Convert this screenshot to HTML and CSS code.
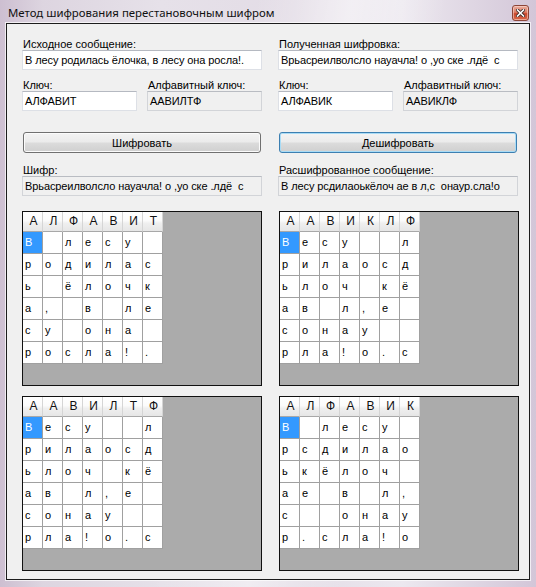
FILE: index.html
```html
<!DOCTYPE html>
<html lang="ru">
<head>
<meta charset="utf-8">
<title>Метод шифрования перестановочным шифром</title>
<link rel="stylesheet" href="styles.css">
</head>
<body>
<div class="window">
  <div class="titlebar">
    <span class="title">Метод шифрования перестановочным шифром</span>
    <span class="close">
      <svg width="9" height="8" viewBox="0 0 9 8">
        <path d="M1.5 1 L7.5 7 M7.5 1 L1.5 7" stroke="#3a2a28" stroke-width="3.2" stroke-linecap="square" fill="none"/>
        <path d="M1.5 1 L7.5 7 M7.5 1 L1.5 7" stroke="#ffffff" stroke-width="1.6" stroke-linecap="square" fill="none"/>
      </svg>
    </span>
  </div>
  <div class="client">
    <div class="cols">
      <div class="col">
        <div class="field">
          <div class="lbl">Исходное сообщение:</div>
          <div class="box">В лесу родилась ёлочка, в лесу она росла!.</div>
        </div>
        <div class="keyrow">
          <div class="field">
            <div class="lbl">Ключ:</div>
            <div class="box">АЛФАВИТ</div>
          </div>
          <div class="field alpha">
            <div class="lbl">Алфавитный ключ:</div>
            <div class="box ro">ААВИЛТФ</div>
          </div>
        </div>
        <div class="btn">Шифровать</div>
        <div class="field gapped">
          <div class="lbl">Шифр:</div>
          <div class="box ro">Врьасреилволсло науачла! о ,уо ске .лдё&nbsp; с</div>
        </div>
      </div>
      <div class="col">
        <div class="field">
          <div class="lbl">Полученная шифровка:</div>
          <div class="box">Врьасреилволсло науачла! о ,уо ске .лдё&nbsp; с</div>
        </div>
        <div class="keyrow">
          <div class="field">
            <div class="lbl">Ключ:</div>
            <div class="box">АЛФАВИК</div>
          </div>
          <div class="field alpha">
            <div class="lbl">Алфавитный ключ:</div>
            <div class="box ro">ААВИКЛФ</div>
          </div>
        </div>
        <div class="btn focus">Дешифровать</div>
        <div class="field gapped">
          <div class="lbl">Расшифрованное сообщение:</div>
          <div class="box ro">В лесу рсдилаоькёлоч ае в л,с&nbsp; онаур.сла!о</div>
        </div>
      </div>
    </div>

    <div class="panels">
      <div class="panel">
        <div class="grid">
          <div class="hd">А</div><div class="hd">Л</div><div class="hd">Ф</div><div class="hd">А</div><div class="hd">В</div><div class="hd">И</div><div class="hd">Т</div>
          <div class="c sel">В</div><div class="c"></div><div class="c">л</div><div class="c">е</div><div class="c">с</div><div class="c">у</div><div class="c"></div>
          <div class="c">р</div><div class="c">о</div><div class="c">д</div><div class="c">и</div><div class="c">л</div><div class="c">а</div><div class="c">с</div>
          <div class="c">ь</div><div class="c"></div><div class="c">ё</div><div class="c">л</div><div class="c">о</div><div class="c">ч</div><div class="c">к</div>
          <div class="c">а</div><div class="c">,</div><div class="c"></div><div class="c">в</div><div class="c"></div><div class="c">л</div><div class="c">е</div>
          <div class="c">с</div><div class="c">у</div><div class="c"></div><div class="c">о</div><div class="c">н</div><div class="c">а</div><div class="c"></div>
          <div class="c">р</div><div class="c">о</div><div class="c">с</div><div class="c">л</div><div class="c">а</div><div class="c">!</div><div class="c">.</div>
        </div>
      </div>
      <div class="panel">
        <div class="grid">
          <div class="hd">А</div><div class="hd">А</div><div class="hd">В</div><div class="hd">И</div><div class="hd">К</div><div class="hd">Л</div><div class="hd">Ф</div>
          <div class="c sel">В</div><div class="c">е</div><div class="c">с</div><div class="c">у</div><div class="c"></div><div class="c"></div><div class="c">л</div>
          <div class="c">р</div><div class="c">и</div><div class="c">л</div><div class="c">а</div><div class="c">о</div><div class="c">с</div><div class="c">д</div>
          <div class="c">ь</div><div class="c">л</div><div class="c">о</div><div class="c">ч</div><div class="c"></div><div class="c">к</div><div class="c">ё</div>
          <div class="c">а</div><div class="c">в</div><div class="c"></div><div class="c">л</div><div class="c">,</div><div class="c">е</div><div class="c"></div>
          <div class="c">с</div><div class="c">о</div><div class="c">н</div><div class="c">а</div><div class="c">у</div><div class="c"></div><div class="c"></div>
          <div class="c">р</div><div class="c">л</div><div class="c">а</div><div class="c">!</div><div class="c">о</div><div class="c">.</div><div class="c">с</div>
        </div>
      </div>
      <div class="panel">
        <div class="grid">
          <div class="hd">А</div><div class="hd">А</div><div class="hd">В</div><div class="hd">И</div><div class="hd">Л</div><div class="hd">Т</div><div class="hd">Ф</div>
          <div class="c sel">В</div><div class="c">е</div><div class="c">с</div><div class="c">у</div><div class="c"></div><div class="c"></div><div class="c">л</div>
          <div class="c">р</div><div class="c">и</div><div class="c">л</div><div class="c">а</div><div class="c">о</div><div class="c">с</div><div class="c">д</div>
          <div class="c">ь</div><div class="c">л</div><div class="c">о</div><div class="c">ч</div><div class="c"></div><div class="c">к</div><div class="c">ё</div>
          <div class="c">а</div><div class="c">в</div><div class="c"></div><div class="c">л</div><div class="c">,</div><div class="c">е</div><div class="c"></div>
          <div class="c">с</div><div class="c">о</div><div class="c">н</div><div class="c">а</div><div class="c">у</div><div class="c"></div><div class="c"></div>
          <div class="c">р</div><div class="c">л</div><div class="c">а</div><div class="c">!</div><div class="c">о</div><div class="c">.</div><div class="c">с</div>
        </div>
      </div>
      <div class="panel">
        <div class="grid">
          <div class="hd">А</div><div class="hd">Л</div><div class="hd">Ф</div><div class="hd">А</div><div class="hd">В</div><div class="hd">И</div><div class="hd">К</div>
          <div class="c sel">В</div><div class="c"></div><div class="c">л</div><div class="c">е</div><div class="c">с</div><div class="c">у</div><div class="c"></div>
          <div class="c">р</div><div class="c">с</div><div class="c">д</div><div class="c">и</div><div class="c">л</div><div class="c">а</div><div class="c">о</div>
          <div class="c">ь</div><div class="c">к</div><div class="c">ё</div><div class="c">л</div><div class="c">о</div><div class="c">ч</div><div class="c"></div>
          <div class="c">а</div><div class="c">е</div><div class="c"></div><div class="c">в</div><div class="c"></div><div class="c">л</div><div class="c">,</div>
          <div class="c">с</div><div class="c"></div><div class="c"></div><div class="c">о</div><div class="c">н</div><div class="c">а</div><div class="c">у</div>
          <div class="c">р</div><div class="c">.</div><div class="c">с</div><div class="c">л</div><div class="c">а</div><div class="c">!</div><div class="c">о</div>
        </div>
      </div>
    </div>
  </div>
</div>
</body>
</html>
```

FILE: styles.css
```css
html, body {
  margin: 0;
  padding: 0;
}

body {
  width: 536px;
  height: 587px;
  overflow: hidden;
  font-family: "Liberation Sans", Arial, sans-serif;
  font-size: 11px;
  color: #000;
}

.window {
  width: 536px;
  height: 587px;
  box-sizing: border-box;
  background:
    linear-gradient(100deg, rgba(255,255,255,0) 40%, rgba(255,255,255,0.45) 55%, rgba(255,255,255,0) 70%),
    linear-gradient(90deg, #cdbfd1 0%, #ddd5e0 8%, #e6e1e9 30%, #e3dce6 55%, #ece8ef 75%, #d3c6d8 100%);
  display: flex;
  flex-direction: column;
}

.titlebar {
  height: 23px;
  display: flex;
  align-items: flex-start;
  justify-content: space-between;
  flex: none;
}

.title {
  font-family: "Noto Sans", "Open Sans", sans-serif;
  font-size: 11.4px;
  line-height: 16px;
  padding: 5px 0 0 8px;
  color: #111;
}

.close {
  margin: 5px 7px 0 0;
  width: 17px;
  height: 16px;
  box-sizing: border-box;
  border: 1px solid #8c4538;
  border-radius: 3px;
  background: linear-gradient(#eab0a2 0%, #dc7b63 45%, #c9472c 55%, #d8694b 100%);
  box-shadow: inset 0 0 0 1px rgba(255,220,210,0.55);
  display: flex;
  align-items: center;
  justify-content: center;
}

.close svg {
  display: block;
}

.client {
  margin-left: 6px;
  width: 524px;
  height: 557px;
  box-sizing: border-box;
  border: 1px solid #1c1c1c;
  box-shadow: 0 0 0 1px rgba(255,255,255,0.7);
  background: #f0f0f0;
  padding: 14px 11px 0 15px;
  flex: none;
}

.cols {
  display: grid;
  grid-template-columns: 240px 240px;
  column-gap: 16px;
}

.col {
  display: flex;
  flex-direction: column;
}

.lbl {
  line-height: 12px;
  height: 12px;
  padding-left: 1px;
  white-space: nowrap;
}

.box {
  height: 20px;
  box-sizing: border-box;
  border: 1px solid #dde0e6;
  border-top-color: #b5b9c1;
  background: #fff;
  line-height: 18px;
  padding-left: 2px;
  white-space: pre;
  overflow: hidden;
  letter-spacing: -0.1px;
}

.box.ro {
  background: #f0f0f0;
  border-color: #d2d4d8;
  border-top-color: #b9bcc2;
}

.keyrow {
  display: grid;
  grid-template-columns: 115px 115px;
  column-gap: 10px;
  margin-top: 9px;
}

.alpha .lbl {
  padding-left: 1px;
}

.btn {
  margin: 21px 1px 0 1px;
  height: 21px;
  box-sizing: border-box;
  border: 1px solid #707070;
  border-radius: 3px;
  background: linear-gradient(#f3f3f3 0%, #ebebeb 48%, #dcdcdc 52%, #cfcfcf 100%);
  box-shadow: inset 0 0 0 1px #fbfbfb;
  display: flex;
  align-items: center;
  justify-content: center;
  font-size: 11px;
}

.btn.focus {
  border-color: #3c7fb1;
  box-shadow: inset 0 0 0 1px #a9dcf6;
}

.gapped {
  margin-top: 11px;
}

.panels {
  display: grid;
  grid-template-columns: 240px 240px;
  grid-auto-rows: 175px;
  column-gap: 17px;
  row-gap: 10px;
  margin-top: 15px;
}

.panel {
  box-sizing: border-box;
  border: 1px solid #111;
  background: #ababab;
}

.grid {
  display: grid;
  grid-template-columns: repeat(7, 20px);
  grid-template-rows: 20px repeat(6, 22px);
  width: 140px;
}

.hd {
  box-sizing: border-box;
  border-right: 1px solid #d5d5d5;
  border-bottom: 1px solid #a8a8a8;
  background: linear-gradient(#ffffff 0%, #fbfbfb 45%, #efefef 60%, #e6e6e6 100%);
  font-size: 12px;
  line-height: 19px;
  text-align: center;
  padding-left: 2px;
  color: #111;
}

.c {
  box-sizing: border-box;
  border-right: 1px solid #a0a0a0;
  border-bottom: 1px solid #a0a0a0;
  background: #fff;
  line-height: 21px;
  padding-left: 2px;
  font-size: 11px;
}

.c.sel {
  background: #3399ff;
  color: #fff;
}
```
